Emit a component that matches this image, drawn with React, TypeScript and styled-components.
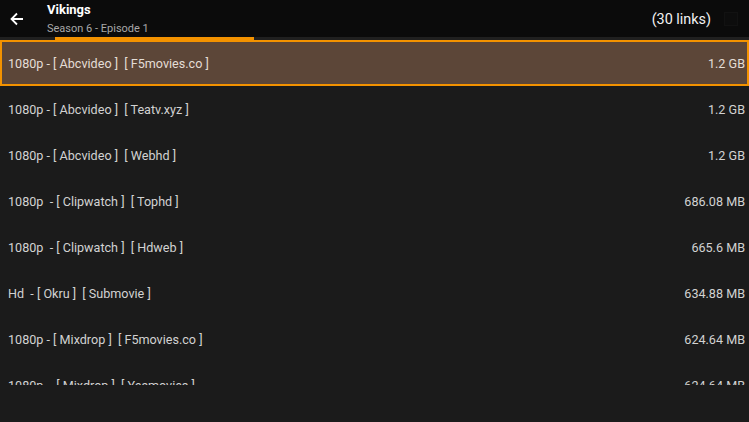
import * as React from "react"
import styled, {createGlobalStyle} from "styled-components";

const GlobalStyles = createGlobalStyle`
  html, body {
    margin: 0;
    padding: 0;
    background: #1b1b1b;
    font-family: 'Roboto', 'Liberation Sans', sans-serif;
  }
`

const links = [
    {label: "1080p - [ Abcvideo ]  [ F5movies.co ]", size: "1.2 GB"},
    {label: "1080p - [ Abcvideo ]  [ Teatv.xyz ]", size: "1.2 GB"},
    {label: "1080p - [ Abcvideo ]  [ Webhd ]", size: "1.2 GB"},
    {label: "1080p  - [ Clipwatch ]  [ Tophd ]", size: "686.08 MB"},
    {label: "1080p  - [ Clipwatch ]  [ Hdweb ]", size: "665.6 MB"},
    {label: "Hd  - [ Okru ]  [ Submovie ]", size: "634.88 MB"},
    {label: "1080p - [ Mixdrop ]  [ F5movies.co ]", size: "624.64 MB"},
    {label: "1080p  - [ Mixdrop ]  [ Yesmovies ]", size: "624.64 MB"},
    {label: "720p - [ Mixdrop ]  [ Tophd ]", size: "612.4 MB"},
]

export default function App() {
    return (
        <>
            <GlobalStyles/>
            <Screen>
                <Header>
                    <BackButton>
                        <svg width="16" height="16" viewBox="0 0 16 16" fill="none" stroke="#fff" strokeWidth="1.8">
                            <path d="M14 8H2.5M8 2.5L2.5 8L8 13.5"/>
                        </svg>
                    </BackButton>
                    <Titles>
                        <Title>Vikings</Title>
                        <Subtitle>Season 6 - Episode 1</Subtitle>
                    </Titles>
                    <LinkCount>(30 links)</LinkCount>
                    <FaintIcon/>
                </Header>
                <Progress>
                    <ProgressFill style={{marginLeft: 55, width: 199}}/>
                </Progress>
                <List>
                    {links.map((l, i) => (
                        <Row key={i} $selected={i === 0}>
                            <Label>{l.label}</Label>
                            <Size>{l.size}</Size>
                        </Row>
                    ))}
                </List>
            </Screen>
        </>
    )
}

const Screen = styled.div`
  width: 749px;
  height: 422px;
  background: #1b1b1b;
  display: flex;
  flex-direction: column;
  overflow: hidden;
`

const Header = styled.div`
  height: 37px;
  background: #0b0b0b;
  display: flex;
  align-items: center;
  flex-shrink: 0;
`

const BackButton = styled.div`
  width: 47px;
  display: flex;
  justify-content: center;
  align-items: center;
  padding-right: 13px;
  box-sizing: border-box;
`

const Titles = styled.div`
  flex: 1;
  display: flex;
  flex-direction: column;
  margin-top: 1px;
`

const Title = styled.div`
  color: #fff;
  font-weight: 700;
  font-size: 13px;
  line-height: 16px;
`

const Subtitle = styled.div`
  color: #a8a8a8;
  font-size: 11px;
  line-height: 14px;
  margin-top: 4px;
`

const LinkCount = styled.div`
  color: #f2f2f2;
  font-size: 14.4px;
  margin-right: 13px;
  margin-top: 1px;
`

const FaintIcon = styled.div`
  width: 12px;
  height: 12px;
  border: 1px solid #121212;
  background: #0d0d0d;
  margin-right: 11px;
  margin-top: 1px;
`

const Progress = styled.div`
  height: 3px;
  background: #202020;
  display: flex;
  flex-shrink: 0;
`

const ProgressFill = styled.div`
  height: 3px;
  background: #f39200;
`

const List = styled.div`
  height: 345px;
  overflow: hidden;
  flex-shrink: 0;
`

const Row = styled.div<{ $selected?: boolean }>`
  height: 46px;
  box-sizing: border-box;
  display: flex;
  align-items: center;
  justify-content: space-between;
  padding: 0 ${p => p.$selected ? "2px" : "4px"} 0 ${p => p.$selected ? "6px" : "8px"};
  color: ${p => p.$selected ? "#e4ddd6" : "#d2d2d2"};
  background: ${p => p.$selected ? "#5c4638" : "transparent"};
  border: 2px solid ${p => p.$selected ? "#f39200" : "transparent"};
  border-left-width: ${p => p.$selected ? "2px" : "0"};
  border-right-width: ${p => p.$selected ? "2px" : "0"};
  font-size: 12.6px;
`

const Label = styled.span`
  white-space: pre;
`

const Size = styled.span`
  white-space: pre;
`
